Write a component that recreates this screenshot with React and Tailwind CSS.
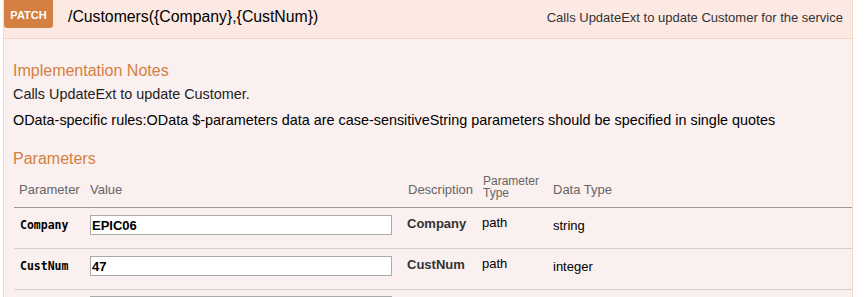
const ROWS = [
  { name: 'Company', value: 'EPIC06', desc: 'Company', type: 'path', dataType: 'string' },
  { name: 'CustNum', value: '47', desc: 'CustNum', type: 'path', dataType: 'integer' },
];

export default function App() {
  return (
    <div className="w-[866px] h-[297px] overflow-hidden bg-white font-['Liberation_Sans',Arial,sans-serif]">
      <div className="ml-[3px] w-[850px] border-x border-[#f5d5c3]">
        {/* heading */}
        <div className="h-[39px] flex items-start bg-[#fce9e3] border-b border-[#f5d5c3]">
          <div className="w-[49px] h-[28px] rounded-b-[3px] bg-[#d38042] text-white text-[11px] font-bold flex items-center justify-center pt-[3px]">
            PATCH
          </div>
          <div className="ml-[15px] mt-[7px] text-[15.8px] leading-[19px] text-black">/Customers({'{'}Company{'}'},{'{'}CustNum{'}'})</div>
          <div className="ml-auto mr-[9px] mt-[10px] text-[13px] leading-[16px] text-[#333]">
            Calls UpdateExt to update Customer for the service
          </div>
        </div>

        {/* content */}
        <div className="bg-[#faf0ef] pl-[9px] pt-[22px] h-[260px]">
          <h4 className="text-[16px] leading-[19px] text-[#d38042]">Implementation Notes</h4>
          <p className="mt-[6px] text-[14.4px] leading-[17px] text-[#222]">Calls UpdateExt to update Customer.</p>
          <p className="mt-[9px] text-[14.4px] leading-[17px] text-black">
            OData-specific rules:OData $-parameters data are case-sensitiveString parameters should be specified in single quotes
          </p>
          <h4 className="mt-[20px] text-[16px] leading-[19px] text-[#d38042]">Parameters</h4>

          <table className="mt-[8px] ml-[1px] w-[838px] border-collapse text-[13px] text-left">
            <thead>
              <tr className="border-b border-[#999] text-[#666]">
                <th className="font-normal w-[71px] pl-[5px] pb-[10px] align-bottom leading-[15px]">Parameter</th>
                <th className="font-normal w-[318px] pl-[5px] pb-[10px] align-bottom leading-[15px]">Value</th>
                <th className="font-normal w-[75px] pl-[5px] pb-[10px] align-bottom leading-[15px]">Description</th>
                <th className="font-normal w-[70px] pl-[5px] pb-[8px] align-bottom text-[12px] leading-[11.5px]">
                  Parameter<br />Type
                </th>
                <th className="font-normal pl-[5px] pb-[10px] align-bottom leading-[15px]">Data Type</th>
              </tr>
            </thead>
            <tbody>
              {ROWS.map((r) => (
                <tr key={r.name} className="border-b border-[#d5d0cf] h-[41px] align-top">
                  <td className="pl-[6px] pt-[10px] font-['DejaVu_Sans_Mono',monospace] font-bold text-[11.5px] leading-[14px] text-black">
                    {r.name}
                  </td>
                  <td className="pl-[5px] pt-[7px]">
                    <input
                      readOnly
                      value={r.value}
                      className="block w-[302px] h-[20px] bg-white border border-[#aaa] px-[1px] text-[13px] font-bold text-black outline-none"
                    />
                  </td>
                  <td className="pl-[4px] pt-[8px] font-bold text-[#333] leading-[16px]">{r.desc}</td>
                  <td className="pl-[4px] pt-[7px] text-black leading-[16px]">{r.type}</td>
                  <td className="pl-[5px] pt-[10px] text-black leading-[16px]">{r.dataType}</td>
                </tr>
              ))}
              <tr>
                <td className="pt-[6px]"></td>
                <td className="pl-[5px] pt-[6px]">
                  <div className="w-[302px] h-[20px] bg-white border border-[#aaa]"></div>
                </td>
                <td></td>
                <td></td>
                <td></td>
              </tr>
            </tbody>
          </table>
        </div>
      </div>
    </div>
  );
}
